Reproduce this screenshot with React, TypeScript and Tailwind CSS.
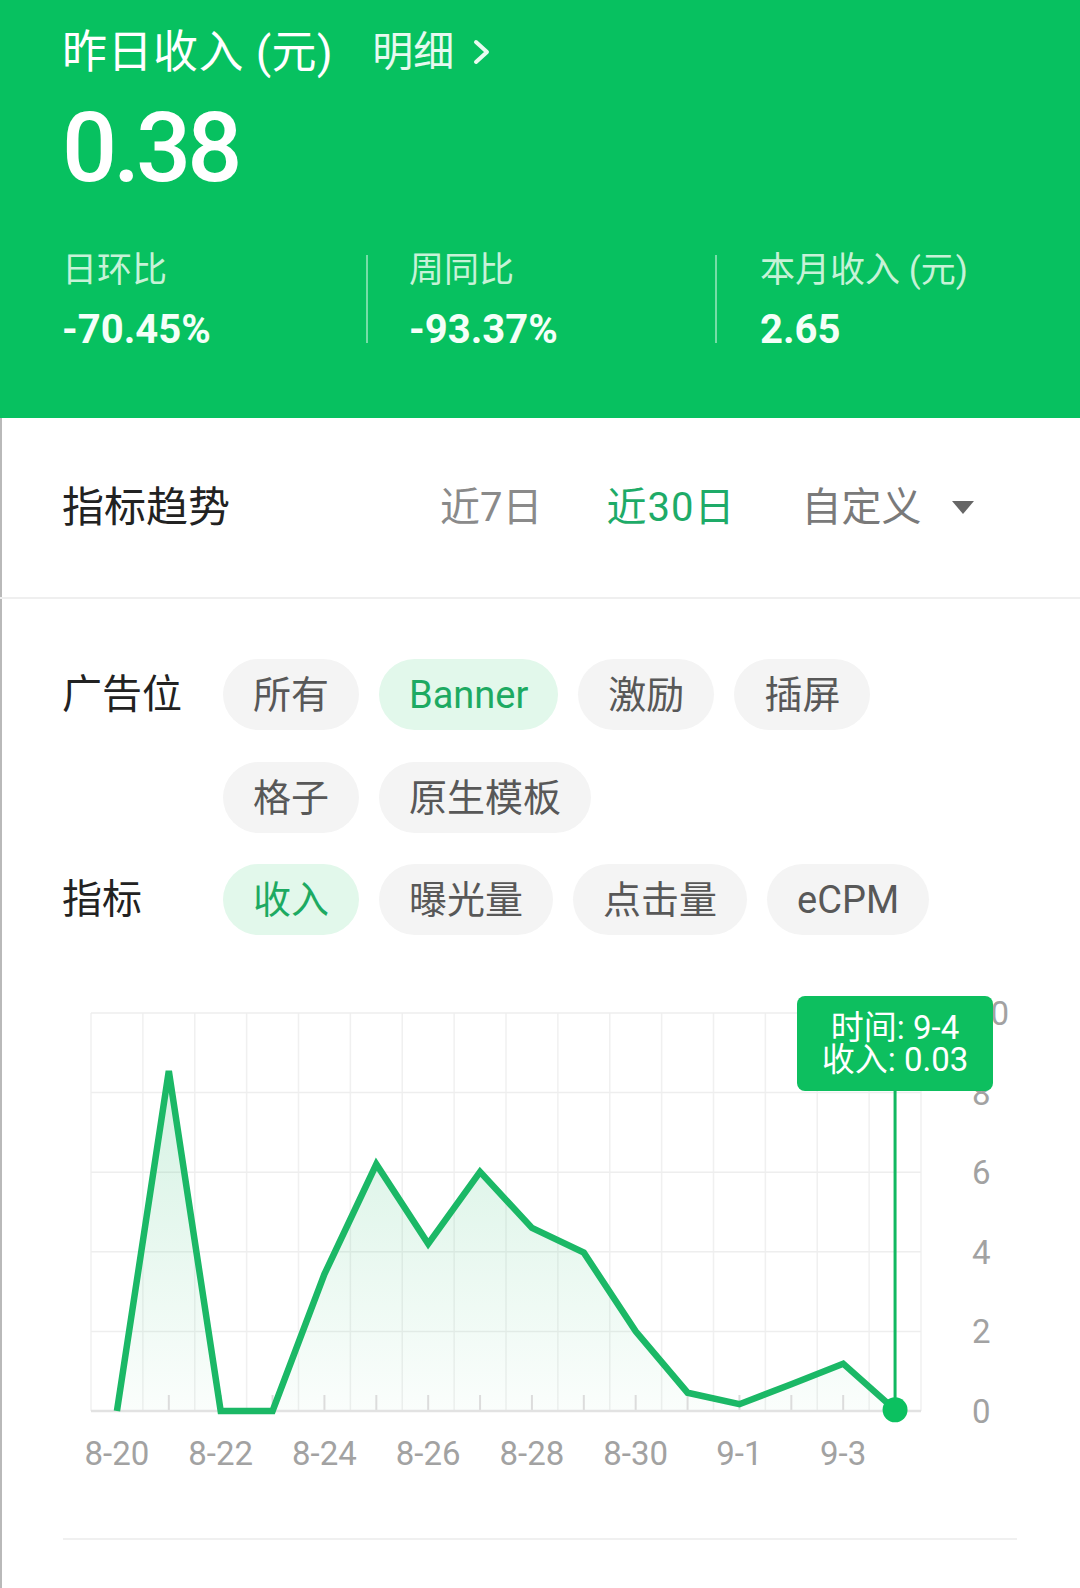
import React from "react";

const vals = [0, 8.54, 0, 0, 3.44, 6.2, 4.2, 6.01, 4.6, 3.98, 2.0, 0.46, 0.17, 0.67, 1.19, 0.03];
const X0 = 91;
const COLW = 51.875;
const TOP = 32;
const BOT = 430;
const UNIT = 39.8;
const px = (k: number) => X0 + COLW / 2 + k * COLW;
const py = (v: number) => BOT - v * UNIT;

function Chip({ label, active }: { label: string; active?: boolean }) {
  return (
    <div
      className={
        "flex h-[71px] items-center rounded-full px-[30px] text-[38px] leading-none " +
        (active ? "bg-[#e2f8eb] text-[#1daa62]" : "bg-[#f4f4f4] text-[#585858]")
      }
    >
      {label}
    </div>
  );
}

function Chart() {
  const pts = vals.map((v, k) => `${px(k)},${py(v)}`).join(" ");
  const area = `M${px(0)},${BOT} L${pts.split(" ").join(" L")} L${px(15)},${BOT} Z`;
  const xLabels = [
    [0, "8-20"],
    [2, "8-22"],
    [4, "8-24"],
    [6, "8-26"],
    [8, "8-28"],
    [10, "8-30"],
    [12, "9-1"],
    [14, "9-3"],
  ] as const;
  const yLabels = ["10", "8", "6", "4", "2", "0"];
  return (
    <div className="relative mt-[46px] h-[500px]">
      <svg width="1080" height="500" className="block">
        <defs>
          <linearGradient id="ag" x1="0" y1="60" x2="0" y2="430" gradientUnits="userSpaceOnUse">
            <stop offset="0" stopColor="#1bb866" stopOpacity="0.2" />
            <stop offset="1" stopColor="#1bb866" stopOpacity="0.02" />
          </linearGradient>
        </defs>
        {Array.from({ length: 17 }).map((_, k) => (
          <line key={"v" + k} x1={X0 + k * COLW} y1={TOP} x2={X0 + k * COLW} y2={BOT} stroke="#f0f0f0" strokeWidth="1.5" />
        ))}
        {Array.from({ length: 5 }).map((_, j) => (
          <line key={"h" + j} x1={X0} y1={TOP + j * 79.6} x2={X0 + 16 * COLW} y2={TOP + j * 79.6} stroke="#eeeeee" strokeWidth="1.5" />
        ))}
        <path d={area} fill="url(#ag)" />
        {vals.map((_, k) => (
          <line key={"t" + k} x1={px(k)} y1={414} x2={px(k)} y2={BOT} stroke="#dcdcdc" strokeWidth="2" />
        ))}
        <line x1={X0} y1={BOT} x2={X0 + 16 * COLW} y2={BOT} stroke="#e2e2e2" strokeWidth="2.5" />
        <polyline points={pts} fill="none" stroke="#1bb866" strokeWidth="6.5" strokeLinejoin="miter" strokeMiterlimit="6" />
        <line x1={px(15)} y1={110} x2={px(15)} y2={BOT} stroke="#11b860" strokeWidth="3" />
        <circle cx={px(15)} cy={py(0.03)} r="12.5" fill="#0cc160" />
        {xLabels.map(([k, t]) => (
          <text key={t} x={px(k)} y={484} textAnchor="middle" fontSize="33" fill="#a2a2a2">
            {t}
          </text>
        ))}
        {yLabels.map((t, j) => (
          <text key={t} x={972} y={TOP + j * 79.6 + 12} fontSize="33" fill="#a2a2a2">
            {t}
          </text>
        ))}
      </svg>
      <div className="absolute left-[797px] top-[15px] flex h-[95px] w-[196px] flex-col items-center justify-center rounded-[8px] bg-[#0dbf5f] text-[33px] leading-[32px] text-white">
        <div>时间: 9-4</div>
        <div>收入: 0.03</div>
      </div>
    </div>
  );
}

export default function App() {
  return (
    <div className="min-h-[1588px] w-[1080px] bg-white font-[family-name:Roboto,'Noto_Sans_CJK_SC',sans-serif]">
      {/* header */}
      <div className="h-[418px] bg-[#07c160] pl-[62px] pt-[30px]">
        <div className="flex h-[44px] items-center leading-none">
          <span className="text-[45px] tracking-[0.5px] text-white">昨日收入 (元)</span>
          <span className="ml-[39px] text-[41px] text-white/90">明细</span>
          <svg width="20" height="28" viewBox="0 0 20 28" className="ml-[18px]">
            <polyline points="4,4 15,14 4,24" fill="none" stroke="#e9fbf0" strokeWidth="4" strokeLinecap="round" strokeLinejoin="round" />
          </svg>
        </div>
        <div className="mt-[26px] text-[97px] font-medium leading-none tracking-[-4px] text-white">0.38</div>
        <div className="mt-[56px] flex items-start">
          <div className="w-[304px]">
            <div className="text-[35px] leading-none text-[#c6f2d7]">日环比</div>
            <div className="mt-[22px] text-[40px] font-bold leading-none text-[#f4fff8]">-70.45%</div>
          </div>
          <div className="mt-[2px] h-[88px] w-[2px] bg-white/45" />
          <div className="ml-[41px] w-[306px]">
            <div className="text-[35px] leading-none text-[#c6f2d7]">周同比</div>
            <div className="mt-[22px] text-[40px] font-bold leading-none text-[#f4fff8]">-93.37%</div>
          </div>
          <div className="mt-[2px] h-[88px] w-[2px] bg-white/45" />
          <div className="ml-[43px]">
            <div className="text-[35px] leading-none text-[#c6f2d7]">本月收入 (元)</div>
            <div className="mt-[22px] text-[40px] font-bold leading-none text-[#f4fff8]">2.65</div>
          </div>
        </div>
      </div>

      {/* body */}
      <div className="shadow-[inset_2px_0_0_#b9b9b9]">
        <div className="flex h-[181px] items-center border-b-2 border-[#efefef] pl-[62px] leading-none">
          <div className="w-[378px] text-[42px] text-[#222]">指标趋势</div>
          <div className="text-[40px] text-[#8a8a8a]">近7日</div>
          <div className="ml-[64px] text-[40px] tracking-[1px] text-[#1eab68]">近30日</div>
          <div className="ml-[66px] text-[40px] text-[#7a7a7a]">自定义</div>
          <svg width="22" height="14" viewBox="0 0 22 14" className="ml-[31px]">
            <polygon points="0,0 22,0 11,13" fill="#666" />
          </svg>
        </div>

        <div className="flex flex-col gap-[31px] px-[62px] pt-[60px]">
          <div className="flex">
            <div className="flex h-[71px] w-[161px] shrink-0 items-center text-[40px] leading-none text-[#222]">广告位</div>
            <div className="flex flex-wrap gap-x-[20px] gap-y-[32px]">
              <Chip label="所有" />
              <Chip label="Banner" active />
              <Chip label="激励" />
              <Chip label="插屏" />
              <Chip label="格子" />
              <Chip label="原生模板" />
            </div>
          </div>
          <div className="flex">
            <div className="flex h-[71px] w-[161px] shrink-0 items-center text-[40px] leading-none text-[#222]">指标</div>
            <div className="flex flex-wrap gap-x-[20px] gap-y-[32px]">
              <Chip label="收入" active />
              <Chip label="曝光量" />
              <Chip label="点击量" />
              <Chip label="eCPM" />
            </div>
          </div>
        </div>

        <Chart />

        <div className="mx-[63px] mt-[57px] h-[2px] bg-[#f0f0f0]" />
        <div className="h-[50px]" />
      </div>
    </div>
  );
}
